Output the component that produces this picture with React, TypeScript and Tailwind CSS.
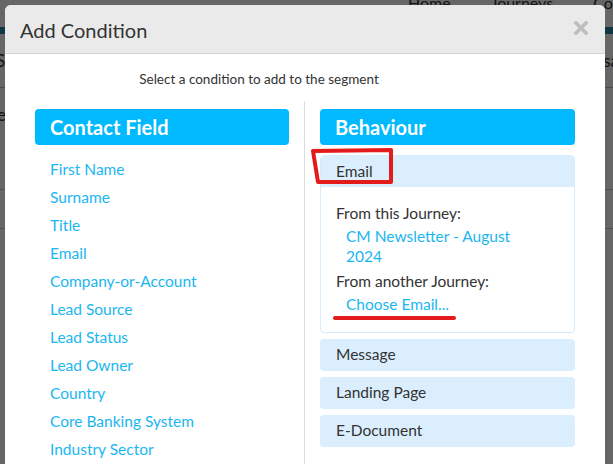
import React from "react";

const contactFields = [
  "First Name",
  "Surname",
  "Title",
  "Email",
  "Company-or-Account",
  "Lead Source",
  "Lead Status",
  "Lead Owner",
  "Country",
  "Core Banking System",
  "Industry Sector",
];

const otherBehaviours = ["Message", "Landing Page", "E-Document"];

function BackgroundPage() {
  // the page behind the modal, dimmed by the overlay
  return (
    <div className="absolute inset-0 bg-white overflow-hidden text-[#333]">
      <div className="h-[27px] overflow-hidden">
        <div className="flex gap-[40px] pl-[408px] -mt-[9px] text-[16px]">
          <span>Home</span>
          <span>Journeys</span>
          <span>Contacts</span>
        </div>
      </div>
      <div className="h-[7px] bg-[#2a86a8]" />
      <div className="h-[53px] flex items-center justify-between text-[17px]">
        <span className="-ml-[4px]">S</span>
        <span className="-mr-[6px]">sa</span>
      </div>
      <div className="h-px bg-[#bbb]" />
      <div className="h-[54px] flex items-center text-[17px]">
        <span className="-ml-[3px]">e</span>
      </div>
      <div className="h-[47px]" />
      <div className="h-px bg-[#ccc]" />
      <div className="h-[38px]" />
      <div className="h-px bg-[#ccc]" />
      <div className="absolute inset-0 bg-black/60" />
    </div>
  );
}

export default function App() {
  return (
    <div
      className="relative w-[613px] h-[464px] overflow-hidden"
      style={{ fontFamily: "Lato, 'Open Sans', sans-serif" }}
    >
      <BackgroundPage />

      {/* Modal */}
      <div className="absolute left-[5px] top-[5px] w-[600px] h-[470px] bg-white rounded-t-[6px] overflow-hidden">
        {/* Header */}
        <div className="h-[49px] bg-[#eaeaea] border-b border-[#d6d6d6] flex items-center justify-between pl-[15px] pr-[17px]">
          <h4 className="text-[20px] text-[#333] mt-[2px]">Add Condition</h4>
          <svg width="14" height="14" viewBox="0 0 14 14" className="-mt-[3px]">
            <path d="M2 2 L12 12 M12 2 L2 12" stroke="#bdbdbd" strokeWidth="3.6" strokeLinecap="square" />
          </svg>
        </div>

        {/* Body */}
        <div className="px-[15px]">
          <p className="text-center text-[13.5px] text-[#333] pt-[16px] pb-[13px] pr-[92px] leading-[18px]">
            Select a condition to add to the segment
          </p>

          <div className="grid grid-cols-[285px_285px]">
            {/* Contact Field column */}
            <div className="border-r border-[#dcdcdc] pl-[15px] pr-[15px] pt-[8px]">
              <div className="h-[36px] rounded-[4px] bg-[#00b9ff] flex items-center pl-[15px]">
                <span className="text-white font-bold text-[20px]">Contact Field</span>
              </div>
              <ul className="mt-[11px] pl-[15px]">
                {contactFields.map((f) => (
                  <li key={f} className="h-[28px] flex items-center text-[15.5px] text-[#1ab6f0]">
                    {f}
                  </li>
                ))}
              </ul>
            </div>

            {/* Behaviour column */}
            <div className="pl-[15px] pr-[15px] pt-[8px]">
              <div className="h-[36px] rounded-[4px] bg-[#00b9ff] flex items-center pl-[15px]">
                <span className="text-white font-bold text-[20px]">Behaviour</span>
              </div>

              <div className="relative mt-[10px] rounded-[4px] border border-[#d6ecfb]">
                <div className="h-[31px] bg-[#daeefd] rounded-t-[4px] flex items-center pl-[15px] text-[15.5px] text-[#333]">
                  Email
                </div>
                <div className="pl-[15px] pt-[16px] pb-[18px] text-[15.5px] leading-[20px]">
                  <div className="text-[#333]">From this Journey:</div>
                  <div className="pl-[10px] mt-[3px] text-[#1ab6f0]">
                    CM Newsletter - August
                    <br />
                    2024
                  </div>
                  <div className="mt-[5px] text-[#333]">From another Journey:</div>
                  <div className="pl-[10px] mt-[3px] text-[#1ab6f0]">Choose Email...</div>
                </div>

                {/* red annotations */}
                <svg
                  className="absolute -left-[10px] -top-[8px] pointer-events-none"
                  width="84"
                  height="38"
                  viewBox="0 0 84 38"
                >
                  <path
                    d="M2 3 L80 2 L80 34 L7 34 Z"
                    fill="none"
                    stroke="#e31b1b"
                    strokeWidth="4"
                    strokeLinejoin="round"
                  />
                </svg>
                <div className="absolute left-[12px] top-[160px] w-[123px] h-[4px] rounded-full bg-[#e31b1b]" />
              </div>

              <div className="mt-[6px] flex flex-col gap-[6px]">
                {otherBehaviours.map((b) => (
                  <div
                    key={b}
                    className="h-[32px] rounded-[4px] bg-[#daeefd] flex items-center pl-[16px] text-[15.5px] text-[#333]"
                  >
                    {b}
                  </div>
                ))}
              </div>
            </div>
          </div>
        </div>
      </div>
    </div>
  );
}
